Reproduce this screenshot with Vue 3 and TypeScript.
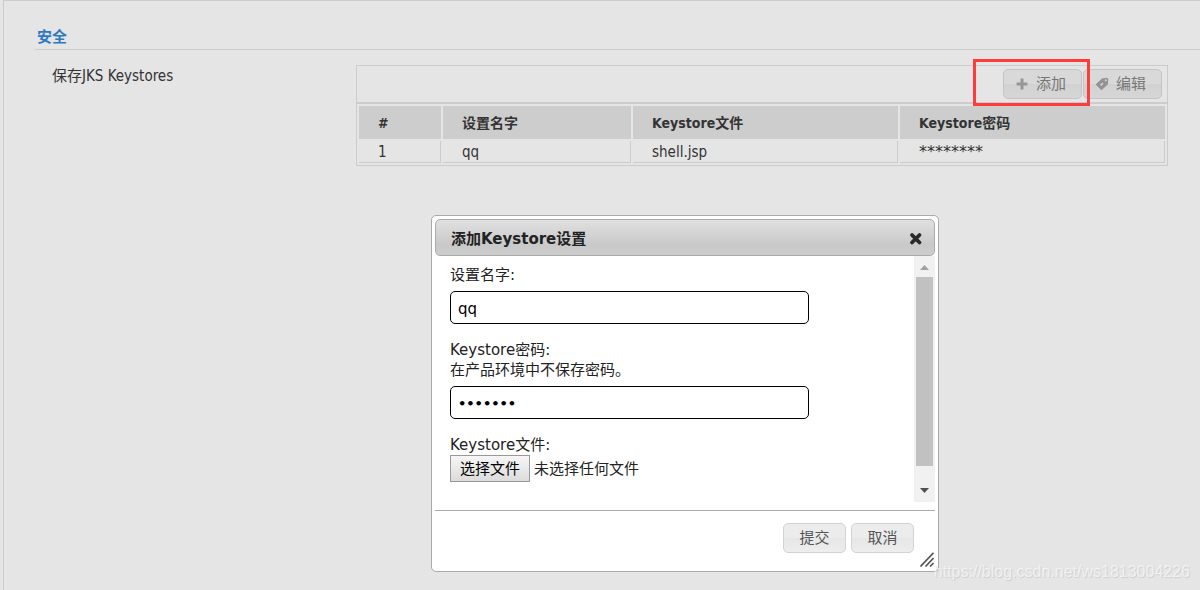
<script setup lang="ts">
import { ref } from 'vue'

interface KeystoreRow {
  id: number
  name: string
  file: string
  password: string
}

const rows = ref<KeystoreRow[]>([
  { id: 1, name: 'qq', file: 'shell.jsp', password: '********' },
])
const settingName = ref('qq')
const password = ref('1234567')
const fileName = ref('')
const picker = ref<HTMLInputElement | null>(null)

function pickFile() {
  picker.value?.click()
}

function fileChosen(event: Event) {
  fileName.value = (event.target as HTMLInputElement).files?.[0]?.name ?? ''
}
</script>

<template>
  <div class="page">
    <main class="panel">
      <h2 class="section-title">安全</h2>
      <div class="setting">
        <div class="setting-label">保存JKS Keystores</div>
        <div class="grid-box">
          <div class="toolbar">
            <div class="marked">
              <button type="button" class="btn tool">
                <svg width="14" height="14" viewBox="0 0 14 14" aria-hidden="true">
                  <path d="M5.500 1.500h3v4h4v3h-4v4h-3v-4h-4v-3h4z" fill="#979797" />
                </svg>
                添加
              </button>
              <span class="marker"></span>
            </div>
            <button type="button" class="btn tool">
              <svg width="14" height="14" viewBox="0 0 14 14" aria-hidden="true">
                <path d="M7 1.500 12 .8l1.300 1.200-.3 5.300L6.500 13.300.6 7.500z" fill="#939393" />
                <path d="m5 7.800 2.400-2.300 1.200 1.200-2.400 2.300z" fill="#cfcfcf" />
                <circle cx="10.800" cy="3.200" r="1" fill="#d9d9d9" />
              </svg>
              编辑
            </button>
          </div>
          <table class="grid">
            <colgroup>
              <col class="c-id" />
              <col class="c-name" />
              <col />
              <col />
            </colgroup>
            <thead>
              <tr>
                <th>#</th>
                <th>设置名字</th>
                <th>Keystore文件</th>
                <th>Keystore密码</th>
              </tr>
            </thead>
            <tbody>
              <tr v-for="row in rows" :key="row.id">
                <td>{{ row.id }}</td>
                <td>{{ row.name }}</td>
                <td>{{ row.file }}</td>
                <td class="masked">{{ row.password }}</td>
              </tr>
            </tbody>
          </table>
        </div>
      </div>
    </main>

    <section class="dialog" role="dialog" aria-labelledby="dialog-title">
      <header class="titlebar">
        <span id="dialog-title">添加Keystore设置</span>
        <button type="button" class="close" aria-label="关闭">
          <svg width="14" height="14" viewBox="0 0 14 14" aria-hidden="true">
            <path d="M3 3l7.500 7.500M10.500 3L3 10.500" stroke="#2a2a2a" stroke-width="3.800" stroke-linecap="round" />
          </svg>
        </button>
      </header>
      <div class="content">
        <form class="fields" @submit.prevent>
          <div class="field">
            <label for="setting-name">设置名字:</label>
            <input id="setting-name" v-model="settingName" type="text" class="text" />
          </div>
          <div class="field">
            <label for="store-password">Keystore密码:<br />在产品环境中不保存密码。</label>
            <input id="store-password" v-model="password" type="password" class="text secret" />
          </div>
          <div class="field">
            <label for="store-file">Keystore文件:</label>
            <div class="file">
              <input id="store-file" ref="picker" type="file" class="picker" @change="fileChosen" />
              <button type="button" class="choose" @click="pickFile">选择文件</button>
              <span>{{ fileName || '未选择任何文件' }}</span>
            </div>
          </div>
        </form>
        <div class="scrollbar" aria-hidden="true">
          <svg class="arrow" width="21" height="21" viewBox="0 0 21 21">
            <path d="M6 14h9l-4.500-5z" fill="#a0a0a0" />
          </svg>
          <div class="thumb"></div>
          <svg class="arrow" width="21" height="21" viewBox="0 0 21 21">
            <path d="M6 7h9l-4.500 5z" fill="#505050" />
          </svg>
        </div>
      </div>
      <footer class="actions">
        <button type="button" class="btn">提交</button>
        <button type="button" class="btn">取消</button>
      </footer>
      <svg class="resize" width="14" height="15" viewBox="0 0 14 15" aria-hidden="true">
        <path d="M0.500 14.500 13.500 .8M5.500 14.500 13.500 6M10 14.500 13.500 11" stroke="#555" stroke-width="1.600" />
      </svg>
    </section>
    <div class="watermark">https://blog.csdn.net/ws1813004226</div>
  </div>
</template>

<style>
body {
  margin: 0;
  background: #e5e5e5;
}
</style>

<style scoped>
.page,
.page * {
  box-sizing: border-box;
}

.page {
  position: relative;
  display: flex;
  min-height: 100vh;
  padding-left: 3px;
  overflow: hidden;
  font: 15px/20px "DejaVu Sans Condensed", "DejaVu Sans", "Noto Sans CJK SC", sans-serif;
  color: #333;
}

button,
input {
  font: inherit;
}

.panel {
  flex: 1;
  padding: 24px 0 0 31px;
  border: solid #ccc;
  border-width: 1px 0 0 1px;
}

.section-title {
  margin: 0;
  padding: 2px;
  border-bottom: 1px solid #ccc;
  font-size: 15px;
  line-height: 20px;
  font-weight: 700;
  color: #2f78c4;
}

.setting {
  display: flex;
  align-items: flex-start;
  padding: 15px 32px 0 17px;
}

.setting-label {
  flex: 0 0 304px;
  padding-top: 1px;
}

.grid-box {
  flex: 1;
  border: 1px solid #ccc;
}

.toolbar {
  display: flex;
  justify-content: flex-end;
  gap: 1px;
  padding: 3px 5px;
  border-bottom: 2px solid #ccc;
}

.marked {
  position: relative;
}

.marker {
  position: absolute;
  inset: -10px -8px -7px -30px;
  border: 3px solid #ff3b3b;
  pointer-events: none;
}

.btn {
  display: flex;
  align-items: center;
  justify-content: center;
  width: 63px;
  height: 30px;
  padding: 0;
  border: 1px solid #d3d3d3;
  border-radius: 5px;
  background: linear-gradient(#ececec 50%, #e6e6e6 50%, #ededed);
  color: #555;
}

.tool {
  justify-content: flex-start;
  gap: 7px;
  width: 79px;
  padding-left: 11px;
  border-color: #c4c4c4;
  background: linear-gradient(#d9d9d9 50%, #d2d2d2 50%, #d6d6d6);
  color: #777;
}

.grid {
  width: 100%;
  table-layout: fixed;
  border-collapse: separate;
  border-spacing: 2px;
}

.c-id {
  width: 82px;
}

.c-name {
  width: 188px;
}

.grid th,
.grid td {
  padding: 0 19px;
  text-align: left;
}

.grid th {
  height: 33px;
  background: #cdcdcd;
  font-size: 14px;
}

.grid td {
  height: 22px;
  padding-top: 1px;
  border: solid #ccc;
  border-width: 0 1px 1px 0;
}

.grid .masked {
  font-family: "DejaVu Sans", sans-serif;
  font-size: 16px;
}

.dialog {
  position: absolute;
  top: 215px;
  left: 431px;
  width: 508px;
  padding: 3px;
  border: 1px solid #aaa;
  border-radius: 5px;
  background: #fff;
  font-family: "DejaVu Sans", "Noto Sans CJK SC", sans-serif;
  color: #222;
}

.titlebar {
  display: flex;
  align-items: center;
  justify-content: space-between;
  height: 37px;
  padding: 2px 11px 0 15px;
  border: 1px solid #aaa;
  border-radius: 5px;
  background: linear-gradient(#e0e0e0, #c9c9c9 70%, #cdcdcd);
  font-weight: 700;
}

.close {
  display: flex;
  padding: 0;
  border: 0;
  background: none;
}

.content {
  display: flex;
  height: 246px;
}

.fields {
  flex: 1;
  display: flex;
  flex-direction: column;
  gap: 16px;
  padding: 9px 15px 0;
}

.field label {
  display: block;
}

.text {
  display: block;
  width: 359px;
  height: 33px;
  margin-top: 6px;
  padding: 2px 7px 0;
  border: 1px solid #000;
  border-radius: 5px;
  background: #fff;
  color: #000;
}

.secret {
  font-size: 13px;
  font-weight: 700;
}

.file {
  display: flex;
  align-items: center;
  gap: 4px;
}

.picker {
  display: none;
}

.choose {
  width: 80px;
  height: 27px;
  padding: 0;
  border: 1px solid #999;
  border-radius: 0;
  background: linear-gradient(#f6f6f6, #dcdcdc);
  color: #000;
}

.scrollbar {
  display: flex;
  flex-direction: column;
  width: 21px;
  background: #f1f1f1;
}

.scrollbar .arrow:last-child {
  margin-top: auto;
}

.thumb {
  height: 189px;
  margin: 0 2px;
  background: #c1c1c1;
}

.actions {
  display: flex;
  justify-content: flex-end;
  gap: 5px;
  margin-top: 8px;
  padding: 12px 21px 15px;
  border-top: 1px solid #aaa;
}

.resize {
  position: absolute;
  right: 4px;
  bottom: 4px;
}

.watermark {
  position: absolute;
  right: 10px;
  bottom: 8px;
  font: 16px/20px "Liberation Sans", sans-serif;
  color: rgba(255, 255, 255, 0.6);
  text-shadow: 1px 1px 1px rgba(0, 0, 0, 0.1);
}
</style>
